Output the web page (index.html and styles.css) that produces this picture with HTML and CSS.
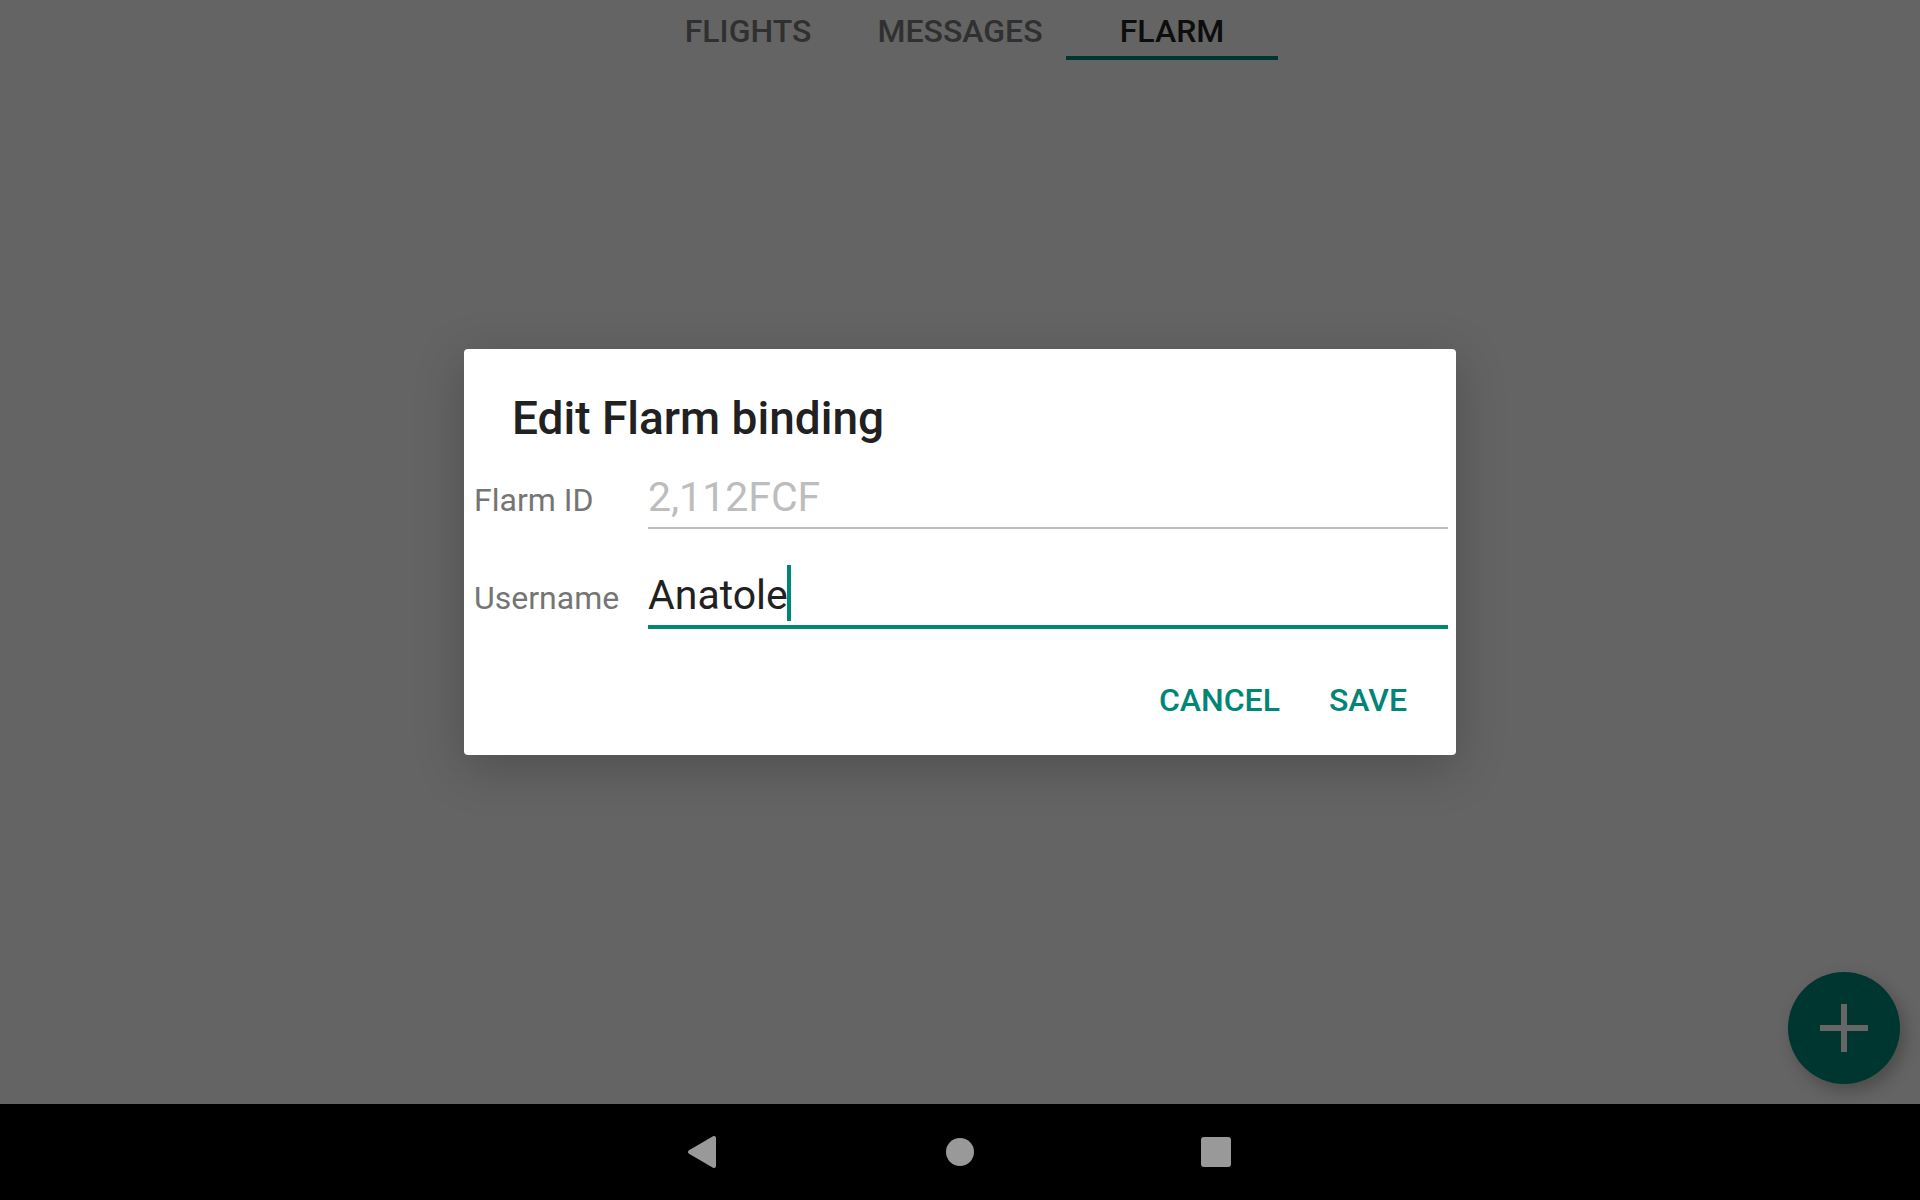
FILE: index.html
```
<!DOCTYPE html>
<html lang="en">
<head>
  <meta charset="utf-8">
  <meta name="viewport" content="width=device-width, initial-scale=1">
  <title>Flarm</title>
  <link rel="stylesheet" href="styles.css">
</head>
<body>
  <main class="screen">
    <nav class="tabs">
      <a class="tab">FLIGHTS</a>
      <a class="tab">MESSAGES</a>
      <a class="tab active">FLARM</a>
    </nav>

    <form class="dialog">
      <h2>Edit Flarm binding</h2>
      <div class="row">
        <label>Flarm ID</label>
        <div class="field disabled"><span>2,112FCF</span></div>
      </div>
      <div class="row">
        <label>Username</label>
        <div class="field focused"><span>Anatole</span><i class="caret"></i></div>
      </div>
      <div class="actions">
        <button type="button">CANCEL</button>
        <button type="button">SAVE</button>
      </div>
    </form>

    <button class="fab" type="button" aria-label="Add">
      <svg width="48" height="48" viewBox="0 0 48 48"><path d="M21 0h6v21h21v6H27v21h-6V27H0v-6h21z" fill="#666"/></svg>
    </button>
  </main>

  <footer class="navbar">
    <svg width="32" height="36" viewBox="0 0 32 36"><path d="M27 4v28L3 18z" fill="#999" stroke="#999" stroke-width="4" stroke-linejoin="round"/></svg>
    <svg width="30" height="30" viewBox="0 0 30 30"><circle cx="15" cy="15" r="14" fill="#999"/></svg>
    <svg width="30" height="30" viewBox="0 0 30 30"><rect width="30" height="30" rx="3" fill="#999"/></svg>
  </footer>
</body>
</html>
```
FILE: styles.css
```
* { box-sizing: border-box; }
body { margin: 0; font-family: Roboto, sans-serif; background: #000; }
.screen {
  position: relative; height: 1104px; background: #646464;
  display: flex; flex-direction: column; align-items: center;
}
.tabs { display: flex; width: 1278px; height: 60px; padding-left: 321px; flex: none; }
.tab {
  width: 212px; height: 60px; line-height: 62px; text-align: center;
  font-size: 32px; font-weight: 500; color: #303030;
}
.tab.active { color: #0d0d0d; border-bottom: 4px solid #003630; }
.dialog {
  width: 992px; height: 406px; margin-top: 289px; background: #fff;
  border-radius: 4px; box-shadow: 0 12px 50px rgba(0,0,0,.22);
}
h2 {
  margin: 0; padding: 39px 48px 1px;
  font-size: 46px; line-height: 60px; font-weight: 500; color: #212121;
}
.row { display: flex; height: 98px; padding: 0 8px 0 10px; }
label { width: 174px; font-size: 32px; line-height: 102px; color: #757575; }
.field {
  flex: 1; display: flex; height: 80px; padding-top: 20px;
  font-size: 41px; line-height: 56px;
}
.disabled { color: #bdbdbd; border-bottom: 2px solid #bdbdbd; }
.focused { height: 82px; color: #212121; border-bottom: 4px solid #008577; }
.caret { width: 4px; height: 56px; margin: -2px 0 0 -1px; background: #008577; }
.actions { display: flex; justify-content: flex-end; gap: 49px; padding: 31px 49px 0 0; }
.actions button {
  border: 0; padding: 0; background: none; color: #008577;
  font: 500 32px/48px Roboto, sans-serif;
}
.fab {
  position: absolute; left: 1788px; top: 972px; width: 112px; height: 112px;
  display: flex; align-items: center; justify-content: center; padding: 0;
  border: 0; border-radius: 50%; background: #003630; box-shadow: 5px 7px 16px rgba(0,0,0,.25);
}
.navbar {
  display: flex; height: 96px; padding-right: 2px;
  align-items: center; justify-content: center; gap: 226px;
}
```
